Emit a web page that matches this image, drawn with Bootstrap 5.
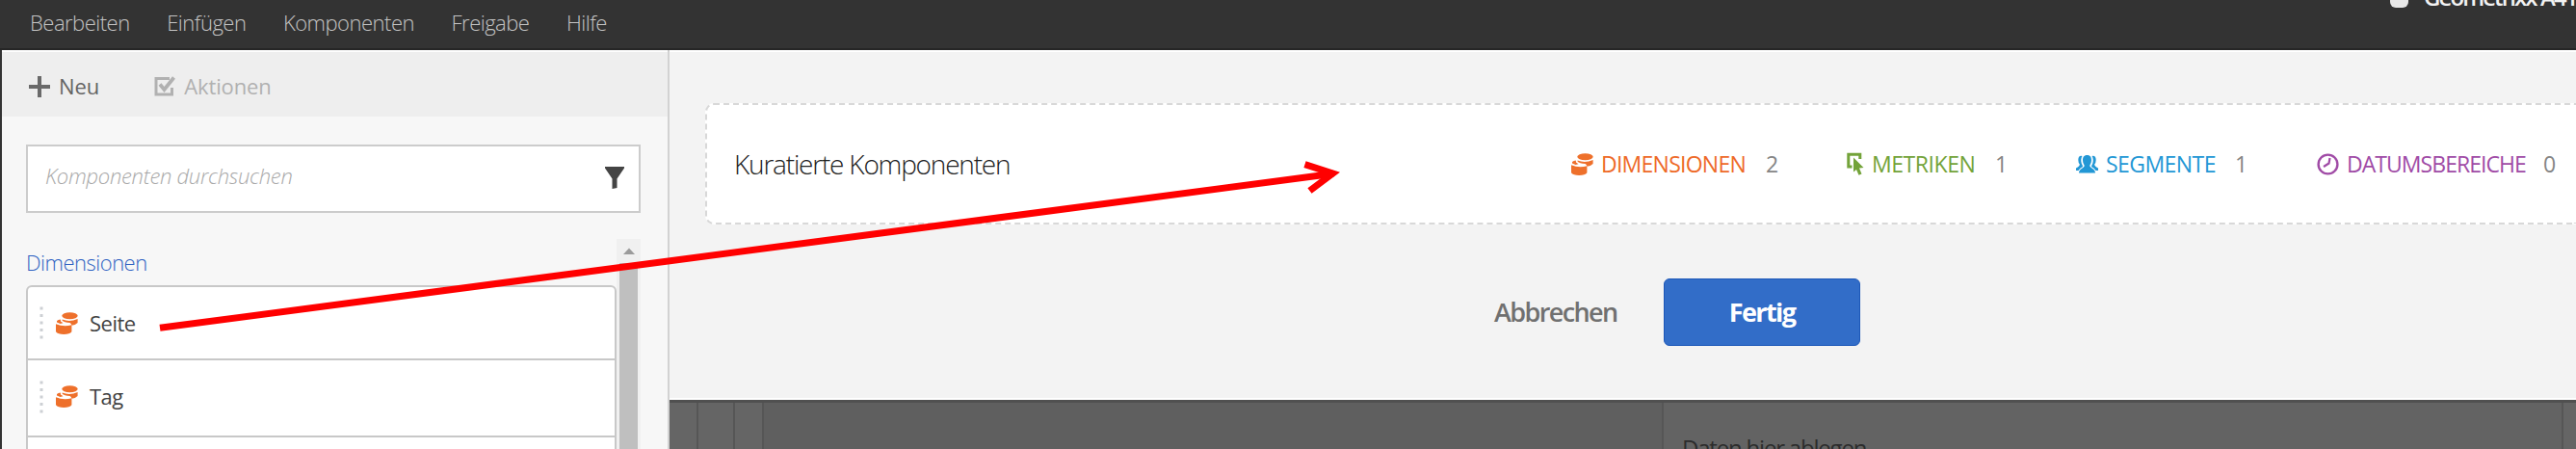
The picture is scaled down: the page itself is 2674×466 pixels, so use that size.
<!DOCTYPE html>
<html lang="de">
<head>
<meta charset="utf-8">
<meta name="viewport" content="width=device-width, initial-scale=1">
<title>Kuratierte Komponenten</title>
<link rel="stylesheet" href="https://cdn.jsdelivr.net/npm/bootstrap@5.3.0/dist/css/bootstrap.min.css">
<style>
  body { font-family: "Open Sans", "Noto Sans", sans-serif; font-size: 22px; height: 466px; overflow: hidden; background: #f7f7f7; }
  svg { display: block; flex: none; }
  .topbar { height: 52px; background: #333; border-bottom: 2px solid #262626; padding: 0 0 0 31px; gap: 38.5px; color: #c4c4c4; font-weight: 350; }
  .topbar a { color: inherit; text-decoration: none; line-height: 47px; letter-spacing: -.5px; }
  .suite { width: 195px; height: 48px; margin-left: auto; overflow: hidden; white-space: nowrap; color: #f2f2f2; font-weight: 600; font-size: 24px; letter-spacing: -1.9px; }
  .suite i { width: 19px; height: 8px; background: #e8e8e8; border-radius: 0 0 6px 6px; margin: 0 16px 0 2px; flex: none; }
  .suite span { margin-top: -21px; line-height: 36px; }
  .workspace { height: 414px; overflow: hidden; }
  .sidebar { width: 695px; flex: none; border-left: 2px solid #333; border-right: 2px solid #d2d2d2; background: #f7f7f7; }
  .tools { height: 69px; border-top: 2px solid #fdfdfd; background: #eee; padding: 4px 0 0 27px; color: #646464; letter-spacing: -.1px; }
  .tools .off { color: #b1b1b1; margin-left: 57px; }
  .tools span { margin-left: 8px; }
  .tools .off + span { color: #b1b1b1; }
  .search { margin: 29px 28px 0 25px; height: 71px; border: 2px solid #ccc; background: #fff; padding: 0 15px 0 18px; color: #a8a8a8; font-style: italic; font-weight: 350; letter-spacing: -.28px; }
  .search span { margin-top: -6px; }
  .search svg { margin-top: -2px; }
  .results { margin: 27px 28px 0 25px; height: 218px; overflow: hidden; }
  .group-title { font-size: 22px; color: #2f62c2; font-weight: 350; line-height: 30px; margin: 9px 0; height: 30px; letter-spacing: -.5px; }
  .parts { --bs-list-group-border-color: #c8c8c8; --bs-list-group-border-width: 2px; --bs-list-group-border-radius: 6px; }
  .parts .list-group-item { height: 80px; padding: 0 0 3px 12px; color: #424242; letter-spacing: -.5px; }
  .parts .list-group-item:first-child { height: 78px; padding-bottom: 0; }
  .parts .list-group-item:last-child { height: 12px; border-bottom: 0; border-radius: 0; }
  .parts svg + svg { margin: 0 12px 0 13px; }
  .track { width: 25px; background: #f0f0f0; }
  .thumb { flex: 1; margin: 9px 3px 0; background: #bfbfbf; }
  .main { background: #f3f3f3; min-width: 0; }
  .curate { height: 363px; border-top: 2px solid #fff; border-bottom: 2px solid #fff; padding: 53px 0 0 37px; }
  .dropzone { height: 126px; border: 2px dashed #d8d8d8; border-right: 0; border-radius: 9px 0 0 9px; background: #fff; padding-left: 28px; }
  .dropzone h1 { font-size: 28px; font-weight: 350; color: #222; letter-spacing: -1.2px; margin: 0; line-height: 40px; }
  .stat-item { font-size: 23px; line-height: 34px; white-space: nowrap; }
  .stat-item b { font-weight: 400; flex: none; }
  .stat-item em { font-style: normal; color: #858585; }
  .dim { color: #ee6a28; width: 286px; } .dim b { width: 171px; margin-left: 8px; letter-spacing: -.75px; }
  .met { color: #73a339; width: 238px; } .met b { width: 128px; margin-left: 3px; letter-spacing: -.45px; }
  .seg { color: #2297d5; width: 250px; } .seg b { width: 134px; margin-left: 8px; letter-spacing: -.55px; }
  .dat { color: #a04ba6; width: 269px; } .dat b { width: 204px; margin-left: 8px; letter-spacing: -.95px; }
  .actions { padding: 56px 0 0 819px; }
  .actions .btn { font-size: 27px; padding: 0; border: 0; height: 70px; letter-spacing: -1.6px; }
  .cancel { width: 176px; text-align: left; color: #707070; font-weight: 600; }
  .actions .done { width: 204px; border: 1px solid #1c57b8; border-radius: 6px; background: #326dc8; color: #fff; font-weight: 700; }
  .canvas { height: 51px; border-top: 3px solid #505050; background: #656565; color: #2c2c2c; font-size: 24px; overflow: hidden; }
  .canvas div { width: 30px; border-right: 2px solid #565656; flex: none; height: 48px; }
  .canvas .margin-col { width: 38px; }
  .canvas .panel { width: 934px; background: #5f5f5f; }
  .canvas .drop { background: #636363; padding: 27px 0 0 19px; line-height: 40px; letter-spacing: -1.2px; }
  .annot { position: absolute; left: 0; top: 0; pointer-events: none; }
</style>
</head>
<body>
<svg width="0" height="0" class="position-absolute">
  <symbol id="drums" viewBox="0 0 23 23">
    <ellipse cx="14.500" cy="3.800" rx="8.200" ry="3.500"/>
    <path d="M6.600 7.600Q14.500 10.500 22.600 7V11Q20 13.500 16.500 13.800 16 11.500 14.500 11 8.500 10.500 6.600 8.800Z"/>
    <path d="M0 12.200Q8 15.500 16.400 13.200V20.300Q14.500 23 8.200 23 2 23 0 20.300Z"/>
    <path d="M1 9Q2.500 7.400 4.800 7.400L5 9.500 7.500 11.200 4.500 12 1 10.600Z"/>
  </symbol>
  <symbol id="grip" viewBox="0 0 4 34">
    <path d="M2 0.500V34" stroke="#cdd0d4" stroke-width="3" stroke-dasharray="3 4.500"/>
  </symbol>
</svg>

<nav class="topbar d-flex">
  <a href="#">Bearbeiten</a><a href="#">Einfügen</a><a href="#">Komponenten</a><a href="#">Freigabe</a><a href="#">Hilfe</a>
  <div class="suite d-flex"><i></i><span>Geometrixx A41</span></div>
</nav>

<div class="workspace d-flex">
  <aside class="sidebar">
    <div class="tools d-flex align-items-center">
      <svg width="24" height="24" fill="none" stroke="#6a6a6a" stroke-width="4"><path d="M12 1V23M1 12H23"/></svg>
      <span>Neu</span>
      <svg class="off" width="23" height="21" fill="none" stroke="#b1b1b1" stroke-width="3"><path d="M16 2.500H2V19H18.500V12"/><path d="M6 8.500L10.500 14 20.500 1.500" stroke-width="3.800"/></svg>
      <span>Aktionen</span>
    </div>
    <div class="search d-flex align-items-center justify-content-between">
      <span>Komponenten durchsuchen</span>
      <svg width="20" height="23" fill="#444"><path d="M0 0H20V1.500L12.500 12.500V22L7.500 23V12.500L0 1.500Z"/></svg>
    </div>
    <div class="results d-flex">
      <div class="flex-grow-1">
        <h2 class="group-title">Dimensionen</h2>
        <ul class="list-group parts">
          <li class="list-group-item d-flex align-items-center"><svg width="4" height="34"><use href="#grip"/></svg><svg width="23" height="23" fill="#ee702b"><use href="#drums"/></svg>Seite</li>
          <li class="list-group-item d-flex align-items-center"><svg width="4" height="34"><use href="#grip"/></svg><svg width="23" height="23" fill="#ee702b"><use href="#drums"/></svg>Tag</li>
          <li class="list-group-item"></li>
        </ul>
      </div>
      <div class="track d-flex flex-column">
        <svg class="mx-auto" width="12" height="16" fill="#9b9b9b"><path d="M6 9.500L12 16H0Z"/></svg>
        <div class="thumb"></div>
      </div>
    </div>
  </aside>

  <main class="main flex-grow-1">
    <section class="curate">
      <div class="dropzone d-flex align-items-center">
        <h1 class="me-auto">Kuratierte Komponenten</h1>
        <div class="stat-item dim d-flex align-items-center"><svg width="23" height="23" fill="#ee702b"><use href="#drums"/></svg><b>DIMENSIONEN</b><em>2</em></div>
        <div class="stat-item met d-flex align-items-center">
          <svg width="23" height="24"><path d="M5.500 15H1.800V2.200H13.800V7" fill="none" stroke="#73a339" stroke-width="3"/><path d="M7 5.500L17.500 16 13 16.500 15.500 22.500 12.500 23.800 10 18 7 20.500Z" fill="#73a339"/></svg>
          <b>METRIKEN</b><em>1</em></div>
        <div class="stat-item seg d-flex align-items-center">
          <svg width="23" height="19" fill="#2297d5"><path d="M11.500 0C15 0 16 2.300 16 5.200 16 8.500 14.300 9.800 14.300 11 14.300 13.500 20 14 20 18.500H3C3 14 8.700 13.500 8.700 11 8.700 9.800 7 8.500 7 5.200 7 2.300 8 0 11.500 0Z"/><path d="M6.500 1Q2.500 0 2.300 5 2.300 8 3.800 9.500 4 11.500 0 13.500V16H2.500Q4 13.500 7 12 7 10.500 5.700 8.500 4.500 4 6.500 1ZM16.500 1Q20.500 0 20.700 5 20.700 8 19.200 9.500 19 11.500 23 13.500V16H20.500Q19 13.500 16 12 16 10.500 17.300 8.500 18.500 4 16.500 1Z"/></svg>
          <b>SEGMENTE</b><em>1</em></div>
        <div class="stat-item dat d-flex align-items-center">
          <svg width="23" height="23" fill="none" stroke="#a04ba6" stroke-width="2.400"><circle cx="11.500" cy="11.500" r="9.900"/><path d="M13.500 5L12.500 10.500 7 14" stroke-width="2.200"/></svg>
          <b>DATUMSBEREICHE</b><em>0</em></div>
      </div>
      <div class="actions d-flex">
        <button class="btn cancel">Abbrechen</button>
        <button class="btn done">Fertig</button>
      </div>
    </section>
    <section class="canvas d-flex">
      <div></div>
      <div class="margin-col"></div>
      <div></div>
      <div class="panel"></div>
      <div class="panel drop">Daten hier ablegen</div>
    </section>
  </main>
</div>

<!-- drag direction: from the list entry to the drop area -->
<svg class="annot" width="2674" height="466" fill="none" stroke="#f00" stroke-width="7">
  <path d="M166 340.300L1384 180.300"/>
  <path d="M1354.500 170.600L1383.500 180 1359.500 198"/>
</svg>
<script src="https://cdn.jsdelivr.net/npm/bootstrap@5.3.0/dist/js/bootstrap.bundle.min.js"></script>
</body>
</html>
